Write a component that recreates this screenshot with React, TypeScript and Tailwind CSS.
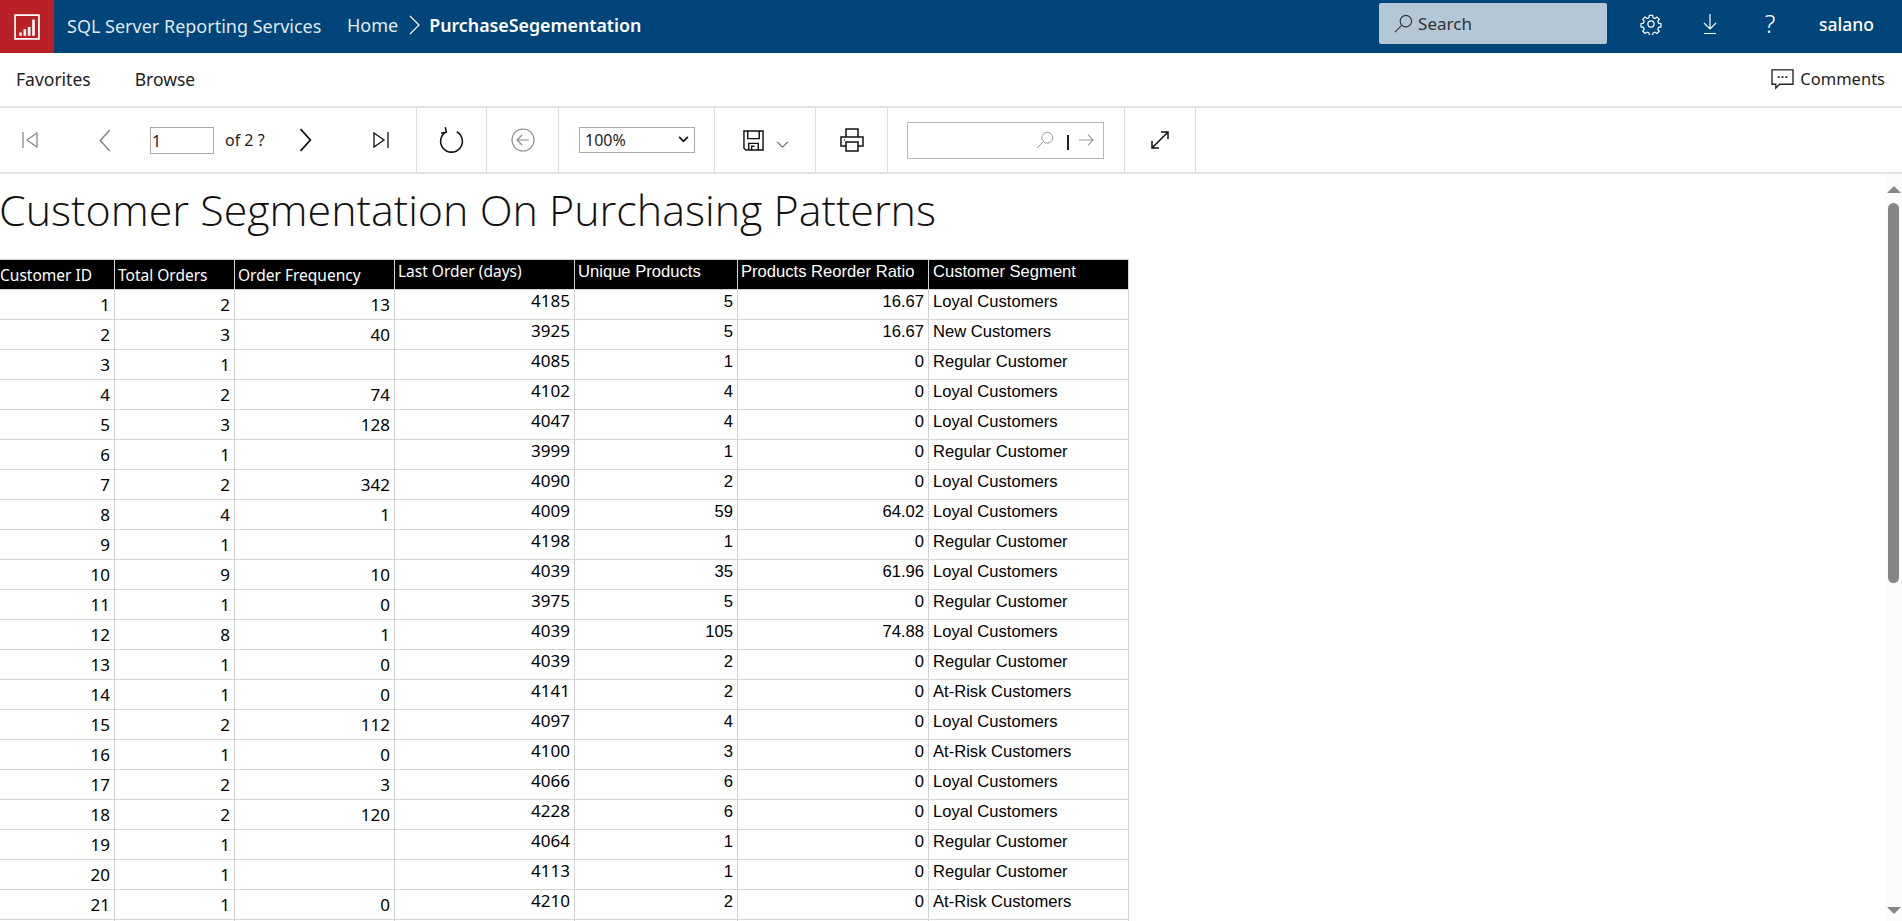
const rows: (string | number)[][] = [
  [1, 2, 13, 4185, 5, "16.67", "Loyal Customers"],
  [2, 3, 40, 3925, 5, "16.67", "New Customers"],
  [3, 1, "", 4085, 1, 0, "Regular Customer"],
  [4, 2, 74, 4102, 4, 0, "Loyal Customers"],
  [5, 3, 128, 4047, 4, 0, "Loyal Customers"],
  [6, 1, "", 3999, 1, 0, "Regular Customer"],
  [7, 2, 342, 4090, 2, 0, "Loyal Customers"],
  [8, 4, 1, 4009, 59, "64.02", "Loyal Customers"],
  [9, 1, "", 4198, 1, 0, "Regular Customer"],
  [10, 9, 10, 4039, 35, "61.96", "Loyal Customers"],
  [11, 1, 0, 3975, 5, 0, "Regular Customer"],
  [12, 8, 1, 4039, 105, "74.88", "Loyal Customers"],
  [13, 1, 0, 4039, 2, 0, "Regular Customer"],
  [14, 1, 0, 4141, 2, 0, "At-Risk Customers"],
  [15, 2, 112, 4097, 4, 0, "Loyal Customers"],
  [16, 1, 0, 4100, 3, 0, "At-Risk Customers"],
  [17, 2, 3, 4066, 6, 0, "Loyal Customers"],
  [18, 2, 120, 4228, 6, 0, "Loyal Customers"],
  [19, 1, "", 4064, 1, 0, "Regular Customer"],
  [20, 1, "", 4113, 1, 0, "Regular Customer"],
  [21, 1, 0, 4210, 2, 0, "At-Risk Customers"],
];

const headers = [
  "Customer ID",
  "Total Orders",
  "Order Frequency",
  "Last Order (days)",
  "Unique Products",
  "Products Reorder Ratio",
  "Customer Segment",
];

const widths = ["w-[115px]", "w-[120px]", "w-[160px]", "w-[180px]", "w-[163px]", "w-[191px]", "w-[200px]"];

function Icon({ children, className }: { children: React.ReactNode; className?: string }) {
  return (
    <svg viewBox="0 0 24 24" fill="none" stroke="currentColor" strokeWidth="1.3" className={className}>
      {children}
    </svg>
  );
}

function TopBar() {
  return (
    <div className="h-[53px] shrink-0 bg-[#00457a] flex items-center text-white">
      <div className="w-[54px] h-full bg-[#b92127] flex items-center justify-center">
        <svg viewBox="0 0 24 24" className="w-[26px] h-[26px]" fill="none" stroke="#fff">
          <rect x="1" y="1" width="22" height="22" strokeWidth="1.6" />
          <path d="M6 20v-3M10 20v-6M14 20v-8M18 20V5" strokeWidth="2.4" />
        </svg>
      </div>
      <div className="ml-[13px] mb-[1px] w-[280px] text-[18px] text-[#dfe8ef]">SQL Server Reporting Services</div>
      <div className="mb-[3px] text-[18px] text-[#e6edf2]">Home</div>
      <svg viewBox="0 0 12 20" className="ml-[11px] mb-[3px] w-[12px] h-[20px]" fill="none" stroke="#fff" strokeWidth="1.2">
        <path d="M1 1l9 9-9 9" />
      </svg>
      <div className="ml-[8px] mb-[3px] text-[17.8px] font-semibold">PurchaseSegementation</div>
      <div className="ml-auto mb-[6px] w-[228px] h-[41px] rounded-[2px] bg-[#b3c7d7] flex items-center pl-[15px] gap-[5px] text-[#333] text-[17px]">
        <svg viewBox="0 0 20 20" className="w-[19px] h-[19px]" fill="none" stroke="#333" strokeWidth="1.2">
          <circle cx="12.5" cy="7.5" r="6" />
          <path d="M8 12l-7 7" />
        </svg>
        Search
      </div>
      <Icon className="ml-[33px] mb-[5px] w-[22px] h-[22px]">
        <circle cx="12" cy="12" r="3.4" />
        <path d="M10.2 2.5h3.6l.5 2.7 1.9.8 2.3-1.6 2.5 2.5-1.6 2.3.8 1.9 2.7.5v3.6l-2.7.5-.8 1.9 1.6 2.3-2.5 2.5-2.3-1.6-1.9.8-.5 2.7h-3.6l-.5-2.7-1.9-.8-2.3 1.6-2.5-2.5 1.6-2.3-.8-1.9-2.7-.5v-3.6l2.7-.5.8-1.9-1.6-2.3 2.5-2.5 2.3 1.6 1.9-.8z" />
      </Icon>
      <svg viewBox="0 0 14 22" className="ml-[41px] mb-[5px] w-[14px] h-[22px]" fill="none" stroke="#fff" strokeWidth="1.2">
        <path d="M7 1v15M1 10l6 6 6-6M1 20.5h12" />
      </svg>
      <div className="ml-[43px] mb-[6px] w-[20px] text-[25px] font-light leading-none text-center">?</div>
      <div className="ml-[39px] mr-[28px] mb-[5px] text-[17.5px] font-medium">salano</div>
    </div>
  );
}

function NavBar() {
  return (
    <div className="h-[55px] shrink-0 border-b-2 border-[#e3e3e3] flex items-center text-[17.5px] text-[#222]">
      <div className="ml-[16px]">Favorites</div>
      <div className="ml-[44px]">Browse</div>
      <div className="ml-auto mr-[17px] flex items-center gap-[6px] text-[16.5px]">
        <svg viewBox="0 0 24 22" className="w-[23px] h-[21px]" fill="none" stroke="#222" strokeWidth="1.4">
          <path d="M1 1h22v15H9l-4 4v-4H1z" />
          <path d="M7 8.5h2M11 8.5h2M15 8.5h2" strokeWidth="2" />
        </svg>
        Comments
      </div>
    </div>
  );
}

function Section({ className, children }: { className: string; children?: React.ReactNode }) {
  return <div className={`h-full shrink-0 border-r border-[#dcdcdc] flex items-center ${className}`}>{children}</div>;
}

function Toolbar() {
  return (
    <div className="h-[66px] shrink-0 border-b-2 border-[#e3e3e3] flex items-center text-[#222]">
      <Section className="w-[417px]">
        <svg viewBox="0 0 18 18" className="ml-[21px] w-[18px] h-[18px]" fill="none" stroke="#8a8a8a" strokeWidth="1.3">
          <path d="M2 1v16M16 2L6 9l10 7z" />
        </svg>
        <svg viewBox="0 0 12 22" className="ml-[59px] w-[13px] h-[23px]" fill="none" stroke="#888" strokeWidth="1.5">
          <path d="M11 1L2 11l9 10" />
        </svg>
        <div className="ml-[39px] w-[64px] h-[27px] border border-[#aaa] pl-[1px] text-[16px] leading-[27px]">1</div>
        <div className="ml-[11px] text-[16px]">of 2 ?</div>
        <svg viewBox="0 0 12 22" className="ml-[34px] w-[14px] h-[24px]" fill="none" stroke="#111" strokeWidth="1.6">
          <path d="M1 1l9 10-9 10" />
        </svg>
        <svg viewBox="0 0 18 18" className="ml-[59px] w-[18px] h-[18px]" fill="none" stroke="#111" strokeWidth="1.3">
          <path d="M16 1v16M2 2l10 7-10 7z" />
        </svg>
      </Section>
      <Section className="w-[70px] justify-center">
        <svg viewBox="0 0 24 28" className="w-[25px] h-[29px]" fill="none" stroke="#111" strokeWidth="1.5">
          <path d="M7 5.5a10.5 10.5 0 1 0 10 0M6 1l1 5-5 1" />
        </svg>
      </Section>
      <Section className="w-[72px] justify-center">
        <svg viewBox="0 0 24 24" className="w-[24px] h-[24px]" fill="none" stroke="#888" strokeWidth="1.1">
          <circle cx="12" cy="12" r="11" />
          <path d="M18 12H6M11 7l-5 5 5 5" />
        </svg>
      </Section>
      <Section className="w-[156px] pl-[20px]">
        <div className="w-[116px] h-[26px] mb-[1px] border border-[#aaa] flex items-center pl-[5px] pr-[5px] text-[16px]">
          100%
          <svg viewBox="0 0 12 8" className="ml-auto w-[11px] h-[7px]" fill="none" stroke="#111" strokeWidth="2">
            <path d="M1 1l5 5 5-5" />
          </svg>
        </div>
      </Section>
      <Section className="w-[101px]">
        <svg viewBox="0 0 22 22" className="ml-[28px] w-[21px] h-[21px]" fill="none" stroke="#111" strokeWidth="1.5">
          <path d="M1 1h20v20H3l-2-2zM5 1v8h12V1M6 21v-7h10v7M9 21v-4h3" />
        </svg>
        <svg viewBox="0 0 14 8" className="ml-[12px] mt-[8px] w-[13px] h-[7px]" fill="none" stroke="#111" strokeWidth="1.1">
          <path d="M1 1l6 6 6-6" />
        </svg>
      </Section>
      <Section className="w-[72px] justify-center">
        <svg viewBox="0 0 24 24" className="w-[24px] h-[24px]" fill="none" stroke="#111" strokeWidth="1.5">
          <path d="M6 9V1h12v8M6 18H1V9h22v9h-5M6 14h12v9H6zM4 12h1" />
        </svg>
      </Section>
      <Section className="w-[237px] pl-[19px]">
        <div className="w-[197px] h-[37px] border border-[#b8b8b8] flex items-center">
          <svg viewBox="0 0 20 20" className="ml-[128px] w-[18px] h-[18px]" fill="none" stroke="#999" strokeWidth="1.1">
            <circle cx="12.5" cy="7.5" r="6" />
            <path d="M8 12l-7 7" />
          </svg>
          <div className="ml-[13px] mt-[4px] w-[1.5px] h-[15px] bg-[#222]" />
          <svg viewBox="0 0 18 14" className="ml-[10px] w-[16px] h-[14px]" fill="none" stroke="#999" strokeWidth="1.2">
            <path d="M0 7h16M10 1l6 6-6 6" />
          </svg>
        </div>
      </Section>
      <Section className="w-[71px] justify-center">
        <svg viewBox="0 0 20 20" className="w-[20px] h-[20px]" fill="none" stroke="#111" strokeWidth="1.5">
          <path d="M2 18L18 2M11 2h7v7M2 11v7h7" />
        </svg>
      </Section>
    </div>
  );
}

function Scrollbar() {
  return (
    <div className="w-[17px] shrink-0 bg-[#fbfbfb] flex flex-col items-center">
      <div className="mt-[12px] w-0 h-0 border-x-[7px] border-x-transparent border-b-[7px] border-b-[#868686]" />
      <div className="mt-[10px] w-[11px] h-[380px] rounded-t-[6px] rounded-b-[6px] bg-[#868686]" />
      <div className="mt-auto mb-[7px] w-0 h-0 border-x-[7px] border-x-transparent border-t-[7px] border-t-[#868686]" />
    </div>
  );
}

function Report() {
  return (
    <div className="flex-1 min-w-0 overflow-hidden">
      <div className="h-[85px] pt-[6px] ml-[-1px] font-['Open_Sans',sans-serif] font-light text-[43px] leading-[60px] text-[#111] whitespace-nowrap">
        Customer Segmentation On Purchasing Patterns
      </div>
      <table className="table-fixed border-collapse w-[1128px] ml-[-1px] text-black">
        <thead>
          <tr className="h-[30px] bg-black text-white">
            {headers.map((h, i) => (
              <th
                key={h}
                className={`${widths[i]} border border-[#d3d3d3] text-left font-normal whitespace-nowrap overflow-hidden ${
                  i === 0 ? "pl-0 pr-[3px]" : i === 6 ? "pl-[4px] pr-[3px]" : "px-[3px]"
                } ${
                  i < 3
                    ? "font-['Noto_Sans',sans-serif] text-[15.5px] align-bottom pb-[2px]"
                    : i === 3
                      ? "font-['Noto_Sans',sans-serif] text-[15.5px] align-top"
                      : "font-['Liberation_Sans',sans-serif] align-top text-[16.6px] leading-[22px] pt-[1px]"
                }`}
              >
                {h}
              </th>
            ))}
          </tr>
        </thead>
        <tbody>
          {rows.map((r) => (
            <tr key={r[0]} className="h-[30px]">
              {r.map((c, i) => (
                <td
                  key={i}
                  className={`border border-[#d3d3d3] leading-[20px] whitespace-nowrap ${
                    i === 6 ? "text-left pl-[4px] pr-[3px]" : "text-right px-[4px]"
                  } ${
                    i < 3
                      ? "font-['Noto_Sans',sans-serif] text-[17px] align-top pt-[5px]"
                      : i === 3
                        ? "font-['Noto_Sans',sans-serif] text-[17px] align-top pt-[1px]"
                        : "font-['Liberation_Sans',sans-serif] align-top text-[16.6px] pt-[2px]"
                  }`}
                >
                  {c}
                </td>
              ))}
            </tr>
          ))}
          <tr className="h-[30px]">
            {headers.map((h) => (
              <td key={h} className="border border-[#d3d3d3]" />
            ))}
          </tr>
        </tbody>
      </table>
    </div>
  );
}

export default function App() {
  return (
    <div className="h-screen w-full overflow-hidden flex flex-col bg-white font-['Noto_Sans',sans-serif]">
      <TopBar />
      <NavBar />
      <Toolbar />
      <div className="flex-1 min-h-0 flex">
        <Report />
        <Scrollbar />
      </div>
    </div>
  );
}
